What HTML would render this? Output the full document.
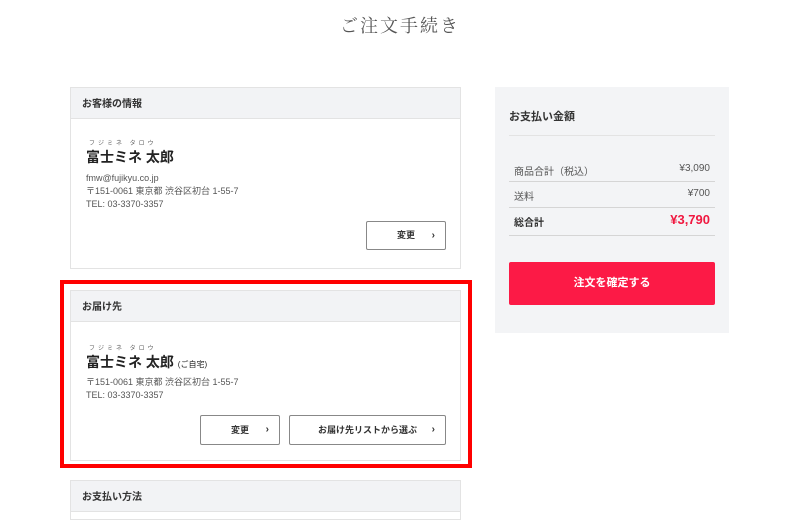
<!DOCTYPE html>
<html><head><meta charset="utf-8"><style>
*{margin:0;padding:0;box-sizing:border-box}
body{width:800px;height:500px;overflow:hidden;background:#fff;font-family:"Liberation Sans","Noto Sans CJK JP",sans-serif;color:#333;position:relative}
.a{position:absolute}
.title{left:0;width:800px;top:12px;text-align:center;font-family:"Liberation Serif","Noto Serif CJK SC",serif;font-size:18px;color:#555;letter-spacing:2px}
.card{border:1px solid #e3e3e3;background:#fff}
.hd{position:absolute;left:0;right:0;top:0;height:31px;background:#f2f3f5;border-bottom:1px solid #e3e3e3;font-size:10px;font-weight:bold;padding:7px 0 0 11px;color:#333}
.furi{font-size:6px;color:#666;letter-spacing:3px}
.name{font-size:14px;font-weight:bold;color:#222}
.sm{font-size:9px;color:#555;line-height:13px}
.btn{border:1px solid #888;border-radius:2px;background:#fff;font-size:9px;font-weight:bold;color:#333;text-align:center}
.btn span.ar{position:absolute;right:10px;top:0;font-size:10px}
.row{left:509px;width:206px;font-size:10px;color:#555;border-bottom:1px solid #d5d5d5;height:25px}
</style></head><body>
<div class="a title">ご注文手続き</div>

<div class="a card" style="left:70px;top:87px;width:391px;height:182px">
<div class="hd">お客様の情報</div>
<div class="a furi" style="left:18px;top:50px">フジミネ タロウ</div>
<div class="a name" style="left:15px;top:59px">富士ミネ 太郎</div>
<div class="a sm" style="left:15px;top:84px">fmw@fujikyu.co.jp<br>〒151-0061 東京都 渋谷区初台 1-55-7<br>TEL: 03-3370-3357</div>
<div class="a btn" style="left:295px;top:133px;width:80px;height:29px;line-height:27px">変更<span class="ar">›</span></div>
</div>

<div class="a" style="left:60px;top:280px;width:412px;height:188px;border:4px solid #f00"></div>
<div class="a card" style="left:70px;top:290px;width:391px;height:171px">
<div class="hd">お届け先</div>
<div class="a furi" style="left:18px;top:52px">フジミネ タロウ</div>
<div class="a name" style="left:15px;top:61px">富士ミネ 太郎 <span style="font-size:8px;font-weight:normal">(ご自宅)</span></div>
<div class="a sm" style="left:15px;top:85px">〒151-0061 東京都 渋谷区初台 1-55-7<br>TEL: 03-3370-3357</div>
<div class="a btn" style="left:129px;top:124px;width:80px;height:30px;line-height:28px">変更<span class="ar">›</span></div>
<div class="a btn" style="left:218px;top:124px;width:157px;height:30px;line-height:28px">お届け先リストから選ぶ<span class="ar">›</span></div>
</div>

<div class="a card" style="left:70px;top:480px;width:391px;height:40px">
<div class="hd">お支払い方法</div>
</div>

<div class="a" style="left:495px;top:87px;width:234px;height:246px;background:#f3f4f6"></div>
<div class="a" style="left:509px;top:108px;font-size:11px;font-weight:bold;color:#333">お支払い金額</div>
<div class="a" style="left:509px;top:135px;width:206px;border-top:1px solid #e3e3e3"></div>
<div class="a row" style="top:157px;padding:6px 5px 0 5px">商品合計（税込）<span style="float:right">¥3,090</span></div>
<div class="a row" style="top:182px;padding:6px 5px 0 5px;height:26px">送料<span style="float:right">¥700</span></div>
<div class="a row" style="top:208px;padding:6px 5px 0 5px;height:28px;font-weight:bold;color:#333">総合計<span style="float:right;color:#f01840;font-size:13px;margin-top:-2px">¥3,790</span></div>
<div class="a" style="left:509px;top:262px;width:206px;height:43px;background:#fc1a46;border-radius:2px;color:#fff;font-size:11px;font-weight:bold;text-align:center;line-height:43px">注文を確定する</div>
</body></html>
